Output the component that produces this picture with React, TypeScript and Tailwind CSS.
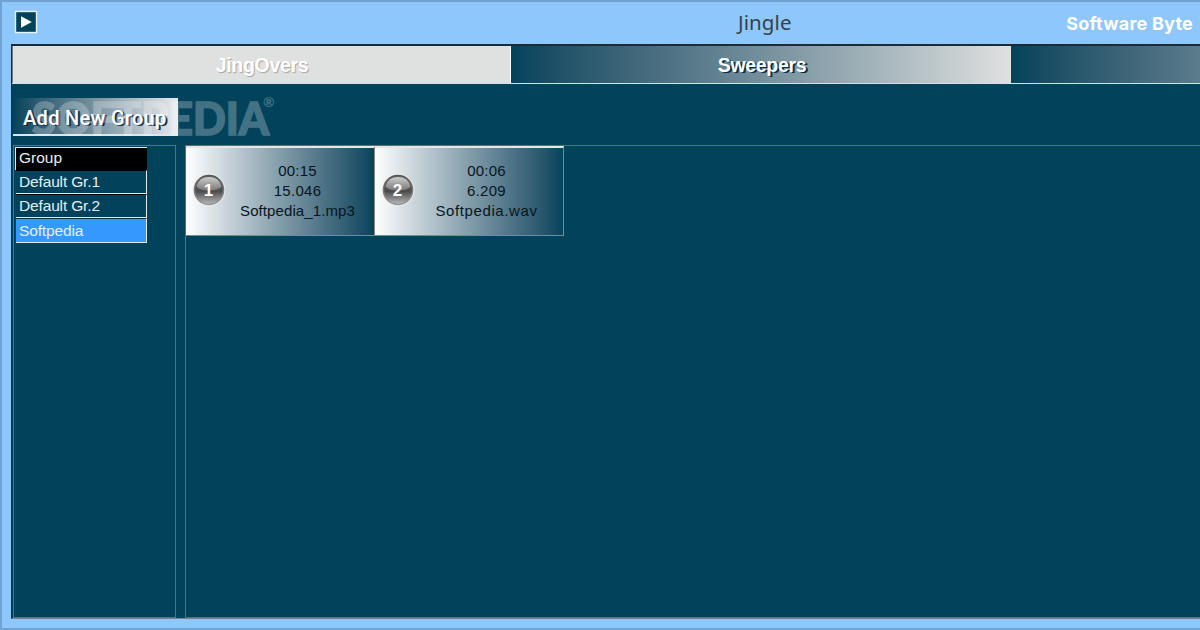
interface Jingle {
  number: number;
  time: string;
  seconds: string;
  file: string;
  fileClass: string;
}

const jingles: Jingle[] = [
  {
    number: 1,
    time: "00:15",
    seconds: "15.046",
    file: "Softpedia_1.mp3",
    fileClass: "tracking-[0.1px]",
  },
  {
    number: 2,
    time: "00:06",
    seconds: "6.209",
    file: "Softpedia.wav",
    fileClass: "tracking-[0.6px]",
  },
];

const groups = ["Default Gr.1", "Default Gr.2", "Softpedia"];

function TitleBar() {
  return (
    <header className="relative flex h-[42px] shrink-0 items-center">
      <svg className="ml-3 -mt-0.5 h-6 w-6" viewBox="0 0 24 24">
        <rect x="0.8" y="0.8" width="22.4" height="22.4" rx="1" fill="#e8f2f8" />
        <rect x="2.2" y="2.2" width="19.6" height="19.6" fill="#03435a" />
        <path d="M7 6.2 17.8 12 7 17.8Z" fill="#fff" />
      </svg>
      {/* Window caption */}
      <div className="absolute left-[736px] top-[5px] font-['Noto_Sans',sans-serif] text-[20.5px] leading-[30px] tracking-[0.1px] text-[#35404c]">
        Jingle
      </div>
      <div className="absolute right-[7px] top-[8px] font-['Inter',sans-serif] text-[18px] font-bold leading-7 tracking-[0.22px] text-white">
        Software Byte
      </div>
    </header>
  );
}

function TabBar() {
  return (
    <nav className="flex h-[40px] shrink-0 border-b border-t-2 border-b-[#d5e0e5] border-t-[#1d2b35] text-[19.5px] font-bold tracking-[-0.3px]">
      <button className="flex w-[499px] shrink-0 items-center justify-center border-l border-r border-l-[#777] border-r-white bg-[#dfe1e0] pl-px pt-[3px] text-white [text-shadow:1px_1px_1px_#aaa5a5]">
        <span>JingOvers</span>
      </button>
      <button className="flex w-[500px] shrink-0 items-center justify-center bg-linear-to-r from-[#02435b] to-[#dfe1e0] pl-0.5 pt-[3px] text-white [text-shadow:2px_1px_0_#082d43]">
        <span>Sweepers</span>
      </button>
      <button
        aria-label="Next tab"
        className="w-[499px] shrink-0 bg-linear-to-r from-[#02435b] to-[#dfe1e0]"
      />
    </nav>
  );
}

function Badge({ number }: { number: number }) {
  return (
    <svg className="-mt-[3px] h-[34px] w-[34px] shrink-0" viewBox="0 0 34 34">
      <defs>
        <linearGradient id={`rim${number}`} x1="0" y1="0" x2="0" y2="1">
          <stop offset="0" stopColor="#555" />
          <stop offset="1" stopColor="#999" />
        </linearGradient>
        <linearGradient id={`ball${number}`} x1="0" y1="0" x2="0" y2="1">
          <stop offset="0" stopColor="#666" />
          <stop offset="0.55" stopColor="#4c4c4c" />
          <stop offset="1" stopColor="#b5b5b5" />
        </linearGradient>
        <linearGradient id={`gloss${number}`} x1="0" y1="0" x2="0" y2="1">
          <stop offset="0" stopColor="#ccc" />
          <stop offset="1" stopColor="#777" />
        </linearGradient>
      </defs>
      <circle cx="17" cy="17" r="16.4" fill="#eee" fillOpacity="0.75" />
      <circle cx="17" cy="17" r="15.3" fill={`url(#rim${number})`} />
      <circle cx="17" cy="17" r="13.8" fill={`url(#ball${number})`} />
      <path d="M4.6 13.5C6 7 11 4 17 4s11 3 12.4 9.5C26 19 8 19 4.6 13.5Z" fill={`url(#gloss${number})`} />
      <text
        x="16.6"
        y="23"
        textAnchor="middle"
        fontFamily="Liberation Sans, sans-serif"
        fontSize="17"
        fontWeight="700"
        fill="#fff"
      >
        {number}
      </text>
    </svg>
  );
}

function JingleCard({ jingle }: { jingle: Jingle }) {
  return (
    <div className="flex h-[90px] w-[189px] items-center border-b border-r border-t-2 border-b-[#858585] border-r-[#858585] border-t-[#e2e8eb] bg-[#02435b] bg-linear-to-r from-white to-[#02435b] bg-origin-border pl-1.5">
      <Badge number={jingle.number} />
      <div className="-mt-0.5 flex flex-1 flex-col items-center pr-[5px] text-[15px] leading-5 text-[#07151d]">
        <span className="tracking-[0.2px]">{jingle.time}</span>
        <span className="tracking-[0.3px]">{jingle.seconds}</span>
        <span className={jingle.fileClass}>{jingle.file}</span>
      </div>
    </div>
  );
}

function GroupList() {
  return (
    <aside className="w-[163px] border border-[#6b6b6b] pl-px pt-px">
      <div className="w-[132px] text-[15.5px] text-[#e7eef1]">
        <div className="h-[23px] border-l border-t border-[#e2e8eb] bg-black pl-[3px] leading-[20px]">
          Group
        </div>
        {groups.map((group) => (
          <div
            key={group}
            className={`ml-px flex items-center border-b border-r border-[#e2e8eb] pl-[3px] leading-5 ${
              group === "Softpedia"
                ? "h-[25px] border-t border-t-[#122f3d] bg-[#3399ff]"
                : "h-6 border-t border-t-black bg-[#02435b]"
            }`}
          >
            <span className="tracking-[-0.15px]">{group}</span>
          </div>
        ))}
      </div>
    </aside>
  );
}

export default function App() {
  return (
    <div className="flex h-[630px] w-[1200px] flex-col overflow-hidden border-b-2 border-l-2 border-t-2 border-[#70a3d1] bg-[#8dc7fb] font-['Liberation_Sans',sans-serif]">
      <TitleBar />
      <main className="ml-[9px] flex h-[575px] flex-col overflow-hidden border-b border-l border-b-[#71838f] border-l-[#1d2b35] bg-[#02435b]">
        <TabBar />
        <div className="relative h-[61px] shrink-0 pl-px pt-[14px]">
          <button className="flex h-[38px] w-[165px] items-center border-b-2 border-[#dde7eb] bg-linear-to-r from-[#02435b] to-[#e8eaeb] pl-[10px] pt-1 font-['Roboto',sans-serif] text-[20px] font-medium text-white [text-shadow:2px_1px_0_#16324a]">
            <span className="whitespace-nowrap tracking-[0.3px]">Add New Group</span>
          </button>
          {/* Brand mark laid over the toolbar */}
          <svg
            className="pointer-events-none absolute left-[18px] top-[10px] opacity-25"
            width="260"
            height="46"
            fill="#fff"
            fontFamily="Lato, sans-serif"
          >
            <text x="2" y="40.5" fontSize="46" fontWeight="900" textLength="237" lengthAdjust="spacingAndGlyphs" stroke="#fff" strokeWidth="1.6">
              SOFTPEDIA
            </text>
            <text x="233" y="13" fontSize="14" fontWeight="700">
              ®
            </text>
          </svg>
        </div>
        <div className="flex h-[473px] shrink-0 gap-[9px] pl-px">
          <GroupList />
          <section className="flex flex-1 items-start border-b border-l border-t border-[#6b6b6b]">
            {jingles.map((jingle) => (
              <JingleCard key={jingle.number} jingle={jingle} />
            ))}
          </section>
        </div>
      </main>
    </div>
  );
}
